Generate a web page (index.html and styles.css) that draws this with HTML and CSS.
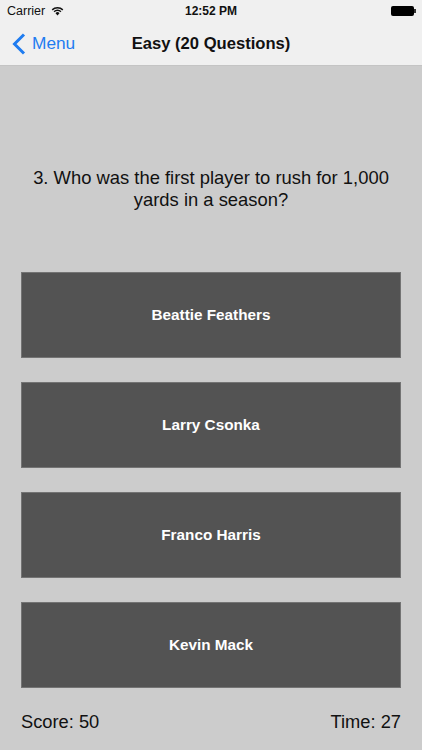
FILE: index.html
```html
<!DOCTYPE html>
<html lang="en">
<head>
    <meta charset="UTF-8">
    <title>Easy (20 Questions)</title>
    <link rel="stylesheet" href="styles.css">
</head>
<body>

<div class="container">
    <div class="header">
        <div class="status-bar">
            <div class="status-left">
                <span>Carrier</span>
                <svg class="wifi" width="13" height="10" viewBox="0 0 14 11">
                    <path d="M0.6 3.7 A9 9 0 0 1 13.4 3.7 L12.3 4.9 A7.4 7.4 0 0 0 1.7 4.9 Z" fill="#111"/>
                    <path d="M2.7 5.8 A6 6 0 0 1 11.3 5.8 L10.2 7 A4.4 4.4 0 0 0 3.8 7 Z" fill="#111"/>
                    <path d="M4.8 7.9 A3 3 0 0 1 9.2 7.9 L7 10.4 Z" fill="#111"/>
                </svg>
            </div>
            <div class="status-time">12:52 PM</div>
            <div class="battery">
                <div class="battery-body"></div>
                <div class="battery-tip"></div>
            </div>
        </div>
        <div class="nav-bar">
            <div class="back">
                <svg width="14" height="22" viewBox="0 0 14 22">
                    <path d="M12 1.5 L2.5 11 L12 20.5" fill="none" stroke="#1f7cf0" stroke-width="3"/>
                </svg>
                <span>Menu</span>
            </div>
            <div class="nav-title">Easy (20 Questions)</div>
        </div>
    </div>

    <div class="question">3. Who was the first player to rush for 1,000 yards in a season?</div>

    <div class="answers">
        <button class="answer">Beattie Feathers</button>
        <button class="answer">Larry Csonka</button>
        <button class="answer">Franco Harris</button>
        <button class="answer">Kevin Mack</button>
    </div>

    <div class="footer">
        <span>Score: 50</span>
        <span>Time: 27</span>
    </div>
</div>

</body>
</html>
```

FILE: styles.css
```css
* {
    margin: 0;
    padding: 0;
    box-sizing: border-box;
}

body {
    width: 422px;
    height: 750px;
    overflow: hidden;
    background: #cccccc;
    font-family: 'Liberation Sans', Arial, sans-serif;
    color: #111;
}

.container {
    display: flex;
    flex-direction: column;
    height: 750px;
}

.header {
    height: 66px;
    background: #f0f0f0;
    border-bottom: 1px solid #c4c4c4;
}

.status-bar {
    position: relative;
    display: flex;
    align-items: center;
    justify-content: space-between;
    height: 22px;
    padding: 0 6px 0 7px;
    font-size: 12.5px;
}

.status-left {
    display: flex;
    align-items: center;
    gap: 6px;
}

.status-time {
    position: absolute;
    left: 0;
    right: 0;
    text-align: center;
    font-weight: bold;
    font-size: 12px;
}

.battery {
    display: flex;
    align-items: center;
}

.battery-body {
    width: 23px;
    height: 10px;
    border-radius: 2px;
    background: #000;
}

.battery-tip {
    width: 2px;
    height: 4px;
    background: #333;
}

.nav-bar {
    position: relative;
    display: flex;
    align-items: center;
    justify-content: center;
    height: 43px;
}

.back {
    position: absolute;
    left: 12px;
    top: 0;
    height: 43px;
    display: flex;
    align-items: center;
    gap: 6px;
    color: #1f7cf0;
    font-size: 17.3px;
}

.nav-title {
    font-size: 16.6px;
    font-weight: bold;
}

.question {
    height: 206px;
    padding: 101px 21px 0;
    font-size: 18.4px;
    line-height: 22px;
    text-align: center;
}

.answers {
    display: flex;
    flex-direction: column;
    gap: 24px;
    padding: 0 21px;
}

.answer {
    height: 86px;
    border: 0;
    border-radius: 0;
    background: #535353;
    box-shadow: 0 0 0 1px #737373 inset;
    color: #fff;
    font: bold 15.3px 'Liberation Sans', Arial, sans-serif;
}

.footer {
    display: flex;
    justify-content: space-between;
    padding: 23px 21px 0;
    font-size: 18.3px;
}
```
